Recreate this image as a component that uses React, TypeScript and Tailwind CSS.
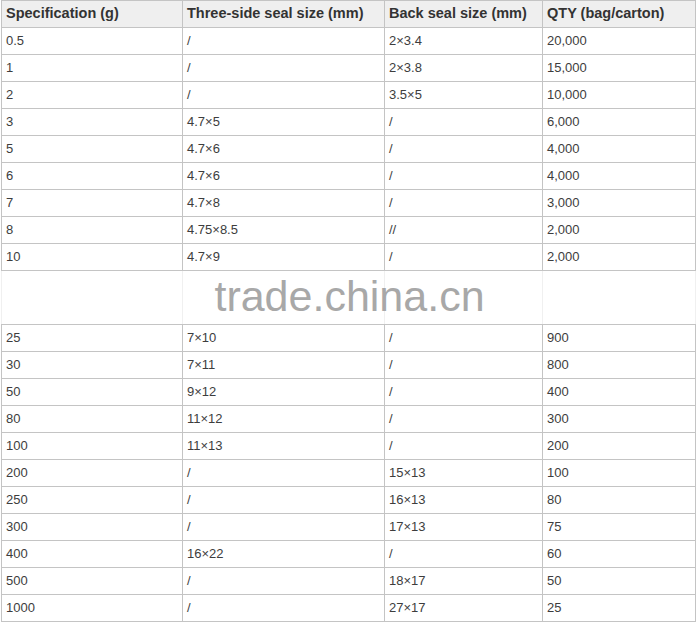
import React from 'react';

const top = [
  ['0.5', '/', '2×3.4', '20,000'],
  ['1', '/', '2×3.8', '15,000'],
  ['2', '/', '3.5×5', '10,000'],
  ['3', '4.7×5', '/', '6,000'],
  ['5', '4.7×6', '/', '4,000'],
  ['6', '4.7×6', '/', '4,000'],
  ['7', '4.7×8', '/', '3,000'],
  ['8', '4.75×8.5', '//', '2,000'],
  ['10', '4.7×9', '/', '2,000'],
];

const bottom = [
  ['25', '7×10', '/', '900'],
  ['30', '7×11', '/', '800'],
  ['50', '9×12', '/', '400'],
  ['80', '11×12', '/', '300'],
  ['100', '11×13', '/', '200'],
  ['200', '/', '15×13', '100'],
  ['250', '/', '16×13', '80'],
  ['300', '/', '17×13', '75'],
  ['400', '16×22', '/', '60'],
  ['500', '/', '18×17', '50'],
  ['1000', '/', '27×17', '25'],
];

const headers = ['Specification (g)', 'Three-side seal size (mm)', 'Back seal size (mm)', 'QTY (bag/carton)'];

function Row({ cells }: { cells: string[] }) {
  return (
    <tr className="h-[27px]">
      {cells.map((c, i) => (
        <td key={i} className="border border-[#c4c4c4] px-[4px] py-0 align-middle">
          {c}
        </td>
      ))}
    </tr>
  );
}

export default function App() {
  return (
    <div className="bg-white w-[697px] h-[623px] pl-[1px] font-['Liberation_Sans',Arial,sans-serif] text-[13px] text-[#3d3d3d]">
      <div className="relative w-[694px]">
        <table className="w-[694px] border-collapse table-fixed">
          <colgroup>
            <col className="w-[181px]" />
            <col className="w-[202px]" />
            <col className="w-[158px]" />
            <col className="w-[153px]" />
          </colgroup>
          <thead>
            <tr className="h-[27px] bg-[#efefef]">
              {headers.map((h) => (
                <th key={h} className="border border-[#c4c4c4] px-[4px] text-left text-[14.5px] font-bold text-[#333]">
                  {h}
                </th>
              ))}
            </tr>
          </thead>
          <tbody>
            {top.map((r) => (
              <Row key={r[0]} cells={r} />
            ))}
            <tr className="h-[54px]">
              {[0, 1, 2, 3].map((i) => (
                <td key={i} className="border-y border-y-[#c4c4c4] border-x border-x-[#f0f0f0]" />
              ))}
            </tr>
            {bottom.map((r) => (
              <Row key={r[0]} cells={r} />
            ))}
          </tbody>
        </table>
        <div className="absolute left-0 right-0 top-[270px] h-[54px] flex items-center justify-center pointer-events-none">
          <span className="ml-[3px] text-[43px] leading-none text-[#a8a8a8] mt-[-2px]">trade.china.cn</span>
        </div>
      </div>
    </div>
  );
}
